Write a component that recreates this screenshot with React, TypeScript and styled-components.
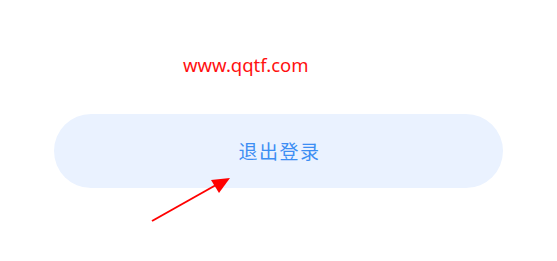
import React from 'react';
import styled, { createGlobalStyle } from 'styled-components';

const GlobalStyle = createGlobalStyle`
  html, body {
    margin: 0;
    padding: 0;
    background: #ffffff;
  }
  body {
    font-family: 'Noto Sans', 'Noto Sans CJK SC', sans-serif;
  }
`;

const Page = styled.div`
  position: relative;
  width: 557px;
  height: 261px;
  display: flex;
  flex-direction: column;
  padding-top: 52px;
  box-sizing: border-box;
`;

const Watermark = styled.div`
  margin-left: 183px;
  color: #ff1010;
  font-size: 18.5px;
  line-height: 26px;
`;

const LogoutButton = styled.button`
  margin: 36px 0 0 54px;
  width: 449px;
  height: 74px;
  border: none;
  border-radius: 37px;
  background: #eaf2ff;
  color: #3d8ef3;
  font-family: 'Noto Sans CJK SC', sans-serif;
  font-size: 19px;
  letter-spacing: 1.5px;
  padding: 0 0 2px 2px;
  cursor: pointer;
`;

const Arrow = styled.svg`
  position: absolute;
  left: 148px;
  top: 172px;
`;

const App = (): JSX.Element => (
  <>
    <GlobalStyle />
    <Page>
      <Watermark>www.qqtf.com</Watermark>
      <LogoutButton>退出登录</LogoutButton>
      <Arrow width="90" height="55" viewBox="0 0 90 55">
        <line x1="4" y1="49" x2="68" y2="13" stroke="#ff0000" strokeWidth="2" />
        <polygon points="82,6 63,8 71,21" fill="#ff0000" />
      </Arrow>
    </Page>
  </>
);

export default App;
